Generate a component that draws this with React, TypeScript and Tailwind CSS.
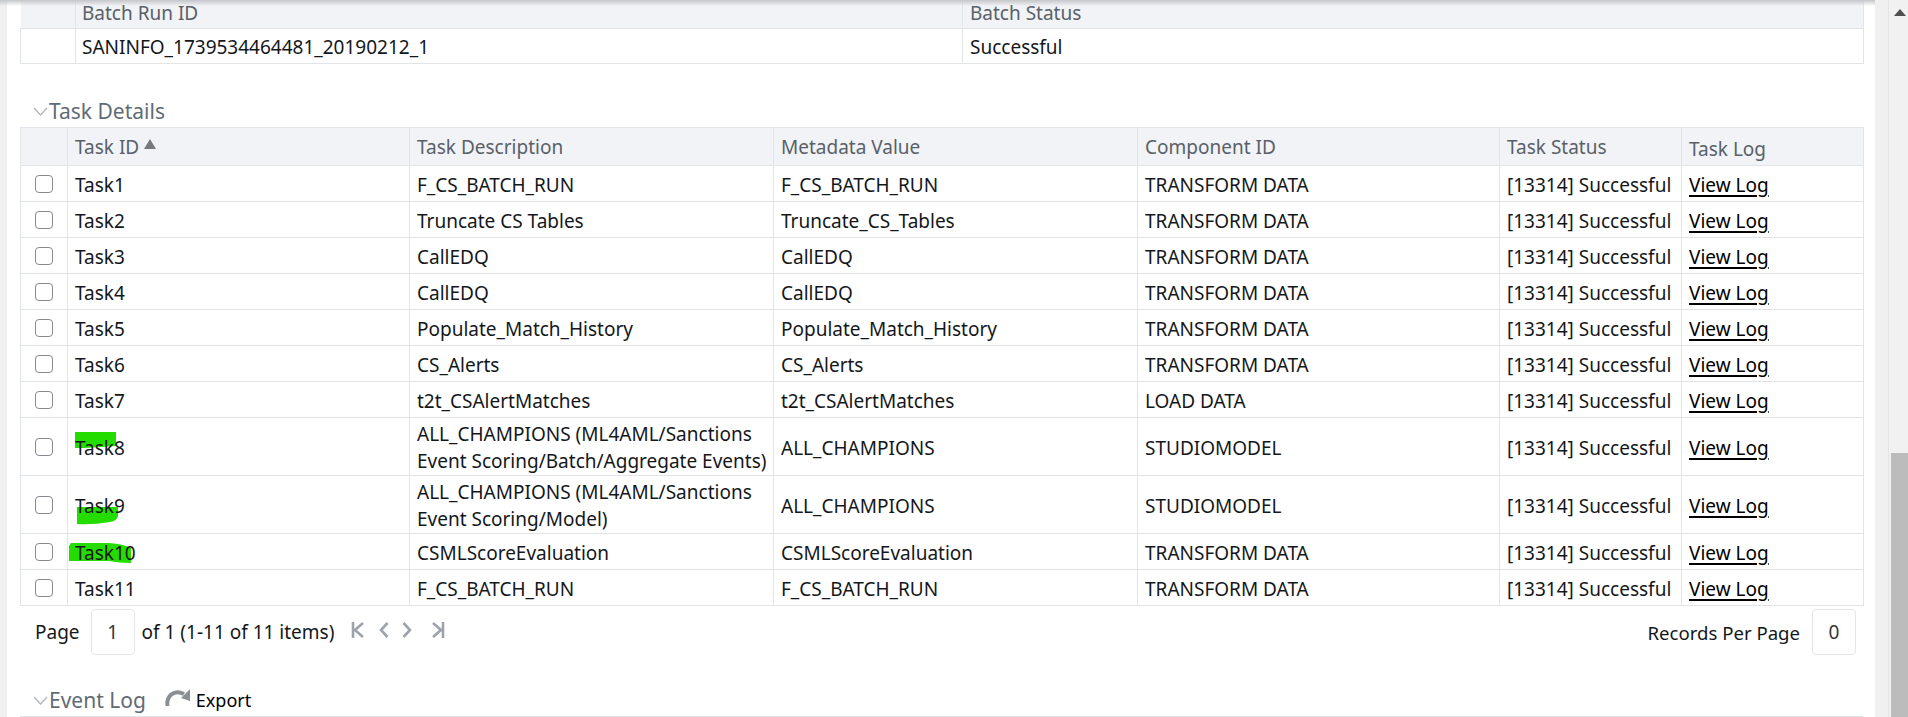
import React from "react";

const tasks = [
  ["Task1", "F_CS_BATCH_RUN", "F_CS_BATCH_RUN", "TRANSFORM DATA", "h-[36px]"],
  ["Task2", "Truncate CS Tables", "Truncate_CS_Tables", "TRANSFORM DATA", "h-[36px]"],
  ["Task3", "CallEDQ", "CallEDQ", "TRANSFORM DATA", "h-[36px]"],
  ["Task4", "CallEDQ", "CallEDQ", "TRANSFORM DATA", "h-[36px]"],
  ["Task5", "Populate_Match_History", "Populate_Match_History", "TRANSFORM DATA", "h-[36px]"],
  ["Task6", "CS_Alerts", "CS_Alerts", "TRANSFORM DATA", "h-[36px]"],
  ["Task7", "t2t_CSAlertMatches", "t2t_CSAlertMatches", "LOAD DATA", "h-[36px]"],
  ["Task8", "ALL_CHAMPIONS (ML4AML/Sanctions|Event Scoring/Batch/Aggregate Events)", "ALL_CHAMPIONS", "STUDIOMODEL", "h-[58px]"],
  ["Task9", "ALL_CHAMPIONS (ML4AML/Sanctions|Event Scoring/Model)", "ALL_CHAMPIONS", "STUDIOMODEL", "h-[58px]"],
  ["Task10", "CSMLScoreEvaluation", "CSMLScoreEvaluation", "TRANSFORM DATA", "h-[36px]"],
  ["Task11", "F_CS_BATCH_RUN", "F_CS_BATCH_RUN", "TRANSFORM DATA", "h-[36px]"],
];

function Highlight({ id }: { id: string }) {
  if (id === "Task8")
    return (
      <svg className="absolute left-[0px] top-[-4px] w-[41px] h-[18px]" viewBox="0 0 41 18">
        <path d="M0 1H41V15L10 17H0Z" fill="#25dc00" />
      </svg>
    );
  if (id === "Task9")
    return (
      <svg className="absolute left-[2px] top-[14px] w-[41px] h-[18px]" viewBox="0 0 41 18">
        <path d="M0 0H41V9Q40 14 33 15Q15 18 0 17Z" fill="#25dc00" />
      </svg>
    );
  if (id === "Task10")
    return (
      <svg className="absolute left-[-6px] top-[3px] w-[63px] h-[21px]" viewBox="0 0 63 21">
        <path d="M2 0H40Q55 1 62 5V20Q50 20 40 18H0V3Z" fill="#25dc00" />
      </svg>
    );
  return null;
}

function Chevron() {
  return (
    <svg className="w-[15px] h-[9px] shrink-0" viewBox="0 0 15 9" fill="none" stroke="#b4b8bc" strokeWidth="1.4">
      <path d="M1 1L7.5 8L14 1" />
    </svg>
  );
}

function PagerIcon({ d, w }: { d: string; w: number }) {
  return (
    <svg width={w} height={16} viewBox={`0 0 ${w} 16`} fill="none" stroke="#9da3ab" strokeWidth="2.6">
      <path d={d} />
    </svg>
  );
}

export default function App() {
  const border = "border border-[#e1e4e8] text-left font-normal";
  const th = border + " pr-[4px] text-[#596068]";
  const td = border + " pr-[7px]";
  return (
    <div className="relative flex h-[717px] w-full overflow-hidden bg-white font-['Noto_Sans',sans-serif] text-[19px] leading-[27px] text-[#14171a]">
      <div className="absolute left-0 top-0 h-[6px] w-[1875px] bg-gradient-to-b from-[#c4c6c9] to-transparent z-10" />
      <div className="w-[7px] shrink-0 bg-[#f0f0f0]" />
      <main className="w-[1868px] shrink-0 pl-[13px] pr-[12px] flex flex-col">
        <table className="table-fixed border-collapse w-[1843px]">
          <colgroup>
            <col className="w-[55px]" />
            <col className="w-[887px]" />
            <col className="w-[901px]" />
          </colgroup>
          <tbody>
            <tr className="h-[28px] bg-[#f1f3f6]">
              <th className="border-b border-r border-[#e1e4e8]" />
              <th className={th + " border-t-0 leading-[24px] pb-[2px] pl-[6px]"}>Batch Run ID</th>
              <th className={th + " border-t-0 leading-[24px] pb-[2px] pl-[7px]"}>Batch Status</th>
            </tr>
            <tr className="h-[35px]">
              <td className={td} />
              <td className={td + " pl-[6px] pt-[4px]"}>SANINFO_1739534464481_20190212_1</td>
              <td className={td + " pl-[7px] pt-[4px]"}>Successful</td>
            </tr>
          </tbody>
        </table>

        <div className="mt-[32px] h-[32px] flex items-center pl-[13px]">
          <Chevron />
          <span className="ml-[1px] text-[21px] text-[#5f6b76]">Task Details</span>
        </div>

        <table className="table-fixed border-collapse w-[1843px]">
          <colgroup>
            <col className="w-[47px]" />
            <col className="w-[342px]" />
            <col className="w-[364px]" />
            <col className="w-[364px]" />
            <col className="w-[362px]" />
            <col className="w-[182px]" />
            <col className="w-[182px]" />
          </colgroup>
          <thead>
            <tr className="h-[38px] bg-[#f1f3f6]">
              <th className={th} />
              <th className={th + " pl-[7px] pt-[2px]"}>
                <span className="inline-flex items-start">
                  Task ID
                  <svg className="ml-[5px] mt-[5px] w-[12px] h-[10px]" viewBox="0 0 12 10">
                    <path d="M6 0L12 10H0Z" fill="#76797d" />
                  </svg>
                </span>
              </th>
              <th className={th + " pl-[7px] pt-[2px]"}>Task Description</th>
              <th className={th + " pl-[7px] pt-[2px]"}>Metadata Value</th>
              <th className={th + " pl-[7px] pt-[2px]"}>Component ID</th>
              <th className={th + " pl-[7px] pt-[2px]"}>Task Status</th>
              <th className={th + " pl-[7px] pt-[5px]"}>Task Log</th>
            </tr>
          </thead>
          <tbody>
            {tasks.map(([id, desc, meta, comp, h]) => {
              const lines = desc.split("|");
              const cell = td + " pl-[7px] pt-[3px]";
              return (
                <tr key={id} className={h}>
                  <td className="border border-[#e1e4e8]">
                    <input
                      type="checkbox"
                      className="appearance-none block mx-auto w-[18px] h-[18px] rounded-[4px] border-[1.5px] border-[#85888c] bg-white"
                    />
                  </td>
                  <td className={cell}>
                    <span className="relative inline-block">
                      <Highlight id={id} />
                      <span className="relative">{id}</span>
                    </span>
                  </td>
                  <td className={cell}>
                    {lines.map((l, i) => (
                      <span key={i} className="block whitespace-nowrap">
                        {l}
                      </span>
                    ))}
                  </td>
                  <td className={cell}>{meta}</td>
                  <td className={cell}>{comp}</td>
                  <td className={cell}>[13314] Successful</td>
                  <td className={cell}>
                    <a className="underline decoration-[2px] underline-offset-[3px] text-black">View Log</a>
                  </td>
                </tr>
              );
            })}
          </tbody>
        </table>

        <div className="h-[75px] flex justify-between items-start pt-[3px] pl-[15px] pr-[7px]">
          <div className="flex items-center">
            <span>Page</span>
            <span className="ml-[11px] w-[44px] h-[46px] flex items-center justify-center border border-[#e6e6e6] rounded-[4px] text-[#33373b]">1</span>
            <span className="ml-[7px]">of 1 (1-11 of 11 items)</span>
            <span className="ml-[17px] mb-[4px] flex items-center">
              <PagerIcon w={13} d="M2 0V16M12 1L4 8L12 15" />
              <span className="ml-[15px]"><PagerIcon w={10} d="M8.5 1L2 8L8.5 15" /></span>
              <span className="ml-[13px]"><PagerIcon w={10} d="M1.5 1L8 8L1.5 15" /></span>
              <span className="ml-[20px]"><PagerIcon w={13} d="M11 0V16M1 1L9 8L1 15" /></span>
            </span>
          </div>
          <div className="flex items-center">
            <span className="text-[18.6px]">Records Per Page</span>
            <span className="ml-[12px] w-[44px] h-[46px] flex items-center justify-center border border-[#e6e6e6] rounded-[4px] text-[#33373b]">0</span>
          </div>
        </div>

        <div className="h-[36px] flex items-center pt-[4px] pl-[13px] border-b border-[#e1e4e8] w-[1843px]">
          <Chevron />
          <span className="ml-[1px] text-[21px] text-[#5f6b76]">Event Log</span>
          <svg className="ml-[18px] mb-[8px] w-[26px] h-[22px]" viewBox="0 0 26 22" fill="none">
            <path d="M3.5 20C2 10 10 3 20 8" stroke="#8b8e92" strokeWidth="4" />
            <path d="M17 12L26 3V15Z" fill="#8b8e92" />
          </svg>
          <span className="ml-[6px] text-[18px] text-black">Export</span>
        </div>
      </main>

      <div className="w-[14px] shrink-0 bg-[#f0f0f0] border-r border-[#e4e4e4]" />
      <div className="w-[19px] shrink-0 bg-[#f1f1f1] flex flex-col items-end">
        <svg className="mt-[9px] mr-[2px] w-[12px] h-[7px]" viewBox="0 0 12 7">
          <path d="M6 0L12 7H0Z" fill="#505050" />
        </svg>
        <div className="mt-auto h-[264px] w-[17px] bg-[#bcbcbc]" />
      </div>
    </div>
  );
}
